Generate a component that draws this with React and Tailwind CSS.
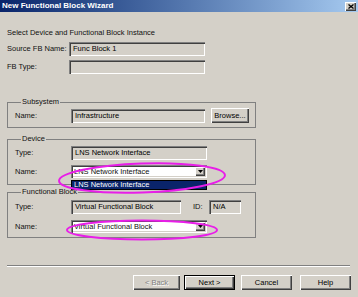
const sunken =
  'shadow-[inset_1px_1px_0_#808080,inset_2px_2px_0_#404040,inset_-1px_-1px_0_#ffffff,inset_-2px_-2px_0_#d4d0c8]';
const raised =
  'shadow-[inset_1px_1px_0_#ffffff,inset_-1px_-1px_0_#404040,inset_-2px_-2px_0_#808080]';

function Field({ value, w = 'w-[136px]', h = 'h-[14px]', white = false }) {
  return (
    <div
      className={`${w} ${h} ${sunken} ${white ? 'bg-white' : 'bg-[#d4d0c8]'} flex items-center pl-[4px] text-black whitespace-nowrap overflow-hidden`}
    >
      {value}
    </div>
  );
}

function Combo({ value }) {
  return (
    <div className={`w-[136px] h-[13px] ${sunken} bg-white flex items-center justify-between pl-[3px] pr-[2px] whitespace-nowrap`}>
      <span>{value}</span>
      <span className={`w-[10px] h-[9px] bg-[#d4d0c8] ${raised} flex items-center justify-center`}>
        <svg width="5" height="3" viewBox="0 0 5 3">
          <path d="M0 0h5L2.5 3z" fill="#000" />
        </svg>
      </span>
    </div>
  );
}

function Group({ title, className = '', children }) {
  return (
    <fieldset className={`w-[249px] border border-[#808080] pl-[7px] ${className}`}>
      <legend className="ml-[6px] px-[1px] leading-[10px]">{title}</legend>
      {children}
    </fieldset>
  );
}

function Btn({ label, className = '', disabled = false, def = false }) {
  return (
    <div
      className={`h-[15px] flex items-center justify-center bg-[#d4d0c8] ${
        def
          ? 'border border-black shadow-[inset_1px_1px_0_#ffffff,inset_-1px_-1px_0_#404040,inset_-2px_-2px_0_#808080]'
          : raised
      } ${disabled ? 'text-[#808080] [text-shadow:1px_1px_0_#fff]' : 'text-black'} ${className}`}
    >
      {label}
    </div>
  );
}

export default function App() {
  return (
    <div className="relative w-[358px] h-[297px] bg-[#d4d0c8] overflow-hidden font-['Liberation_Sans',Arial,sans-serif] text-[7.5px] text-[#111]">
      {/* Title bar */}
      <div className="h-[12px] flex items-center justify-between bg-gradient-to-r from-[#0a246a] to-[#a6caf0] pl-[2px] pr-[2px]">
        <span className="text-white font-bold text-[8px] leading-[12px]">New Functional Block Wizard</span>
        <span className={`w-[11px] h-[9px] bg-[#d4d0c8] ${raised} flex items-center justify-center`}>
          <svg width="6" height="5" viewBox="0 0 6 5">
            <path d="M0.5 0.5L5.5 4.5M5.5 0.5L0.5 4.5" stroke="#000" strokeWidth="1.3" />
          </svg>
        </span>
      </div>

      <div className="pl-[7px] flex flex-col">
        <div className="mt-[16px] leading-[10px]">Select Device and Functional Block Instance</div>

        <div className="mt-[4px] flex items-center">
          <span className="w-[62px]">Source FB Name:</span>
          <Field value="Func Block 1" />
        </div>
        <div className="mt-[4px] flex items-center">
          <span className="w-[62px]">FB Type:</span>
          <Field value="" />
        </div>

        <Group title="Subsystem" className="mt-[23px] pb-[4px]">
          <div className="pt-[1px] flex items-center">
            <span className="w-[56px]">Name:</span>
            <Field value="Infrastructure" w="w-[134px]" />
            <Btn label="Browse..." className="ml-[6px] w-[38px]" />
          </div>
        </Group>

        <Group title="Device" className="mt-[6px] pb-[6px]">
          <div className="pt-[2px] flex items-center">
            <span className="w-[56px]">Type:</span>
            <Field value="LNS Network Interface" />
          </div>
          <div className="mt-[5px] flex items-center">
            <span className="w-[56px]">Name:</span>
            <Combo value="LNS Network Interface" />
          </div>
        </Group>

        <Group title="Functional Block" className="mt-[2px] pb-[4px]">
          <div className="pt-[3px] flex items-center">
            <span className="w-[56px]">Type:</span>
            <Field value="Virtual Functional Block" w="w-[110px]" />
            <span className="ml-[12px] w-[16px]">ID:</span>
            <Field value="N/A" w="w-[32px]" />
          </div>
          <div className="mt-[6px] flex items-center">
            <span className="w-[56px]">Name:</span>
            <Combo value="Virtual Functional Block" />
          </div>
        </Group>

        <div className="mt-[27px] w-[343px] h-[2px] border-t border-[#808080] border-b border-b-white" />

        <div className="mt-[8px] flex">
          <Btn label="< Back" disabled className="ml-[126px] w-[47px]" />
          <Btn label="Next >" def className="ml-[4px] w-[51px]" />
          <Btn label="Cancel" className="ml-[6px] w-[51px]" />
          <Btn label="Help" className="ml-[8px] w-[51px]" />
        </div>
      </div>

      {/* open dropdown list */}
      <div className="absolute left-[71px] top-[180px] w-[136px] h-[10px] bg-[#0a246a] border border-black text-white flex items-center pl-[2px] leading-[8px]">
        LNS Network Interface
      </div>

      {/* magenta annotation ellipses */}
      <svg className="absolute inset-0 pointer-events-none" width="358" height="297">
        <ellipse cx="142" cy="178" rx="83" ry="14.5" fill="none" stroke="#e81ee8" strokeWidth="2" transform="rotate(-2 142 178)" />
        <ellipse cx="142" cy="230" rx="75" ry="9.5" fill="none" stroke="#e81ee8" strokeWidth="2" />
      </svg>
    </div>
  );
}
